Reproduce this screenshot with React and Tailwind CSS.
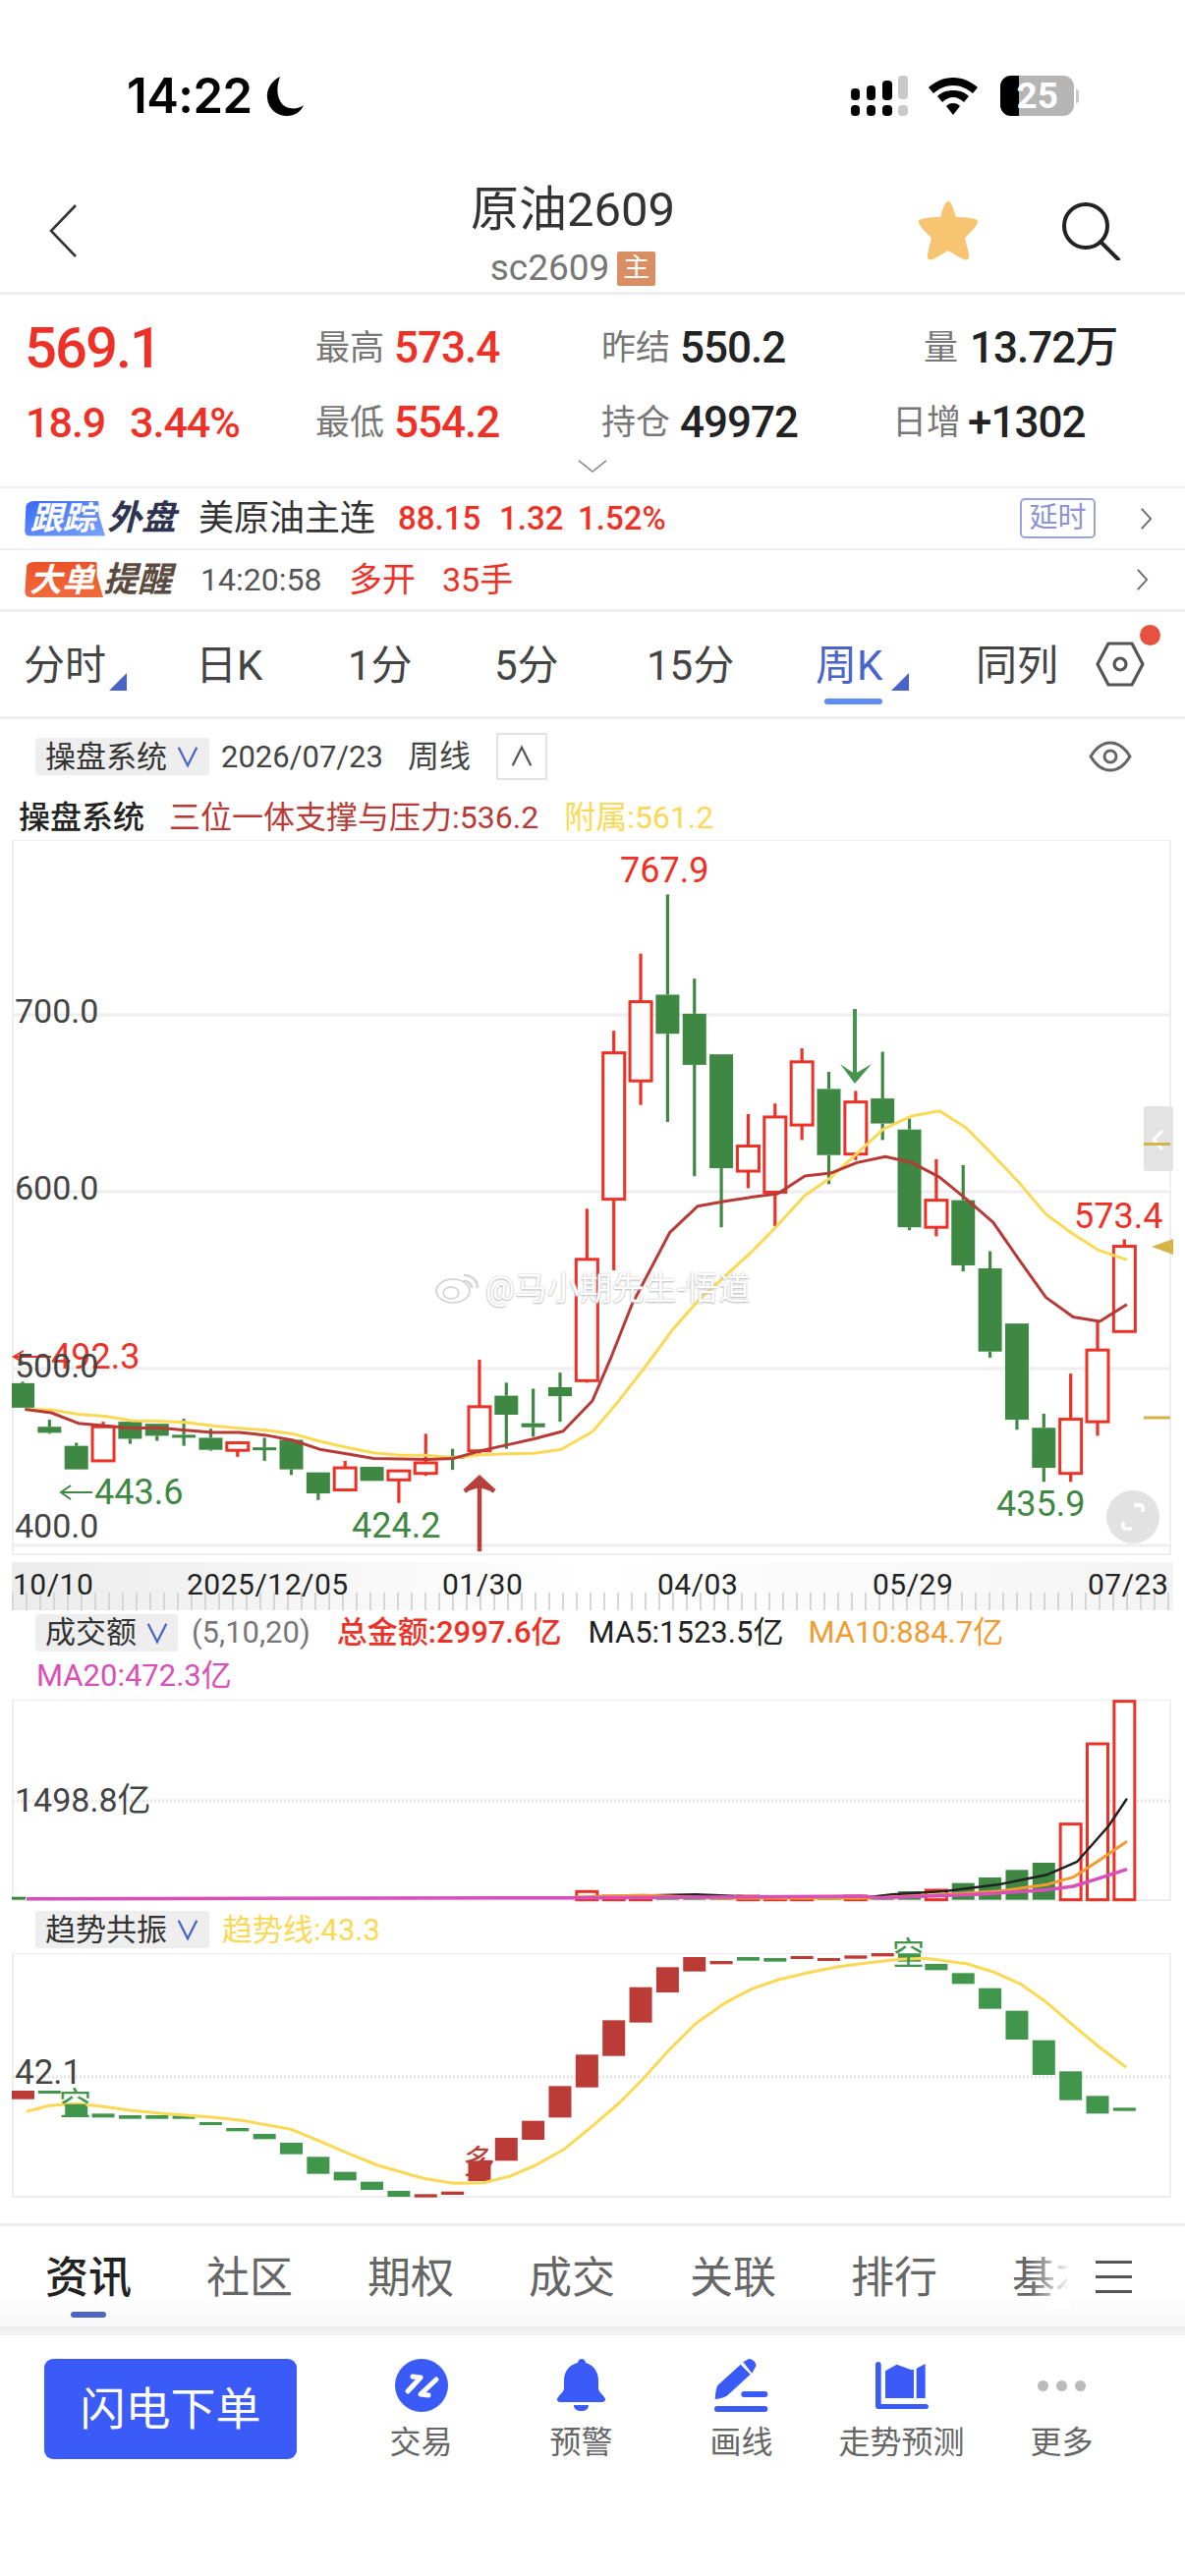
import React from "react";

const zy = (v) => 840 + v / 1.96;
const C = [
  ["g",1110,1113,1162,1162],["g",1186,1200,1212,1214],["g",1232,1238,1285,1285],["r",1190,1200,1268,1270],
  ["g",1190,1190,1224,1234],["g",1194,1194,1218,1228],["g",1184,1216,1220,1238],["g",1204,1222,1246,1248],
  ["r",1230,1232,1247,1260],["g",1222,1241,1246,1268],["g",1224,1226,1285,1296],["g",1291,1291,1333,1346],
  ["r",1268,1282,1326,1326],["g",1280,1280,1308,1308],["r",1286,1288,1306,1352],["r",1214,1272,1293,1298],
  ["g",1244,1258,1262,1286],["r",1066,1160,1248,1254],["g",1112,1138,1176,1244],["g",1124,1193,1201,1220],
  ["g",1092,1121,1139,1190],["r",765,866,1108,1112],["r",410,454,746,888],["r",256,352,510,558],
  ["g",138,338,416,592],["g",306,376,478,700],["g",457,457,684,802],["r",576,640,690,724],
  ["r",555,582,732,800],["r",445,472,598,628],["g",492,526,658,716],["r",530,552,656,668],
  ["g",452,545,595,628],["g",585,607,802,808],["r",666,748,802,820],["g",678,748,878,890],
  ["g",850,884,1050,1062],["g",994,994,1186,1206],["g",1174,1202,1282,1310],["r",1094,1185,1293,1310],
  ["r",990,1047,1190,1218],["r",826,840,1010,1010],
];
const cx = (i) => 23 + 27.35 * i;
const RED = "#ee3127", GREEN = "#3f8843";

const yl = [[66,1165],[136,1166],[207,1175],[278,1179],[349,1188],[420,1189],[491,1191],[562,1198],[633,1203],[704,1207],[775,1214],[846,1229],[917,1241],[988,1252],[1059,1257],[1130,1257],[1201,1262],[1272,1256],[1343,1254],[1414,1253],[1485,1245]];
const yr = [[0,1210],[70,1148],[140,1080],[210,1008],[280,948],[350,900],[420,852],[490,798],[560,740],[630,703],[700,655],[770,606],[845,580],[918,570],[988,603],[1060,658],[1130,714],[1200,776],[1270,815],[1340,848],[1414,867]];
const rl = [[66,1165],[136,1172],[207,1193],[278,1198],[349,1203],[420,1202],[491,1207],[562,1211],[633,1211],[704,1217],[775,1227],[846,1245],[917,1254],[988,1263],[1059,1264],[1130,1265],[1201,1263],[1272,1248],[1343,1236],[1414,1224],[1490,1209]];
const rr = [[0,1148],[50,1060],[105,955],[205,812],[278,760],[350,750],[420,742],[490,735],[562,700],[630,694],[700,673],[775,661],[845,673],[918,702],[988,745],[1060,792],[1130,868],[1200,942],[1272,981],[1342,990],[1414,956]];
const toPts = (l, r) => [...l.map(([x,y]) => `${(x/2.6).toFixed(1)},${zy(y).toFixed(1)}`), ...r.map(([x,y]) => `${(603+x/2.6).toFixed(1)},${zy(y).toFixed(1)}`)].join(" ");

const volTop = {0:932,21:916,22:930,23:930,24:928,25:928,26:930,27:930,28:932,29:932,30:932,31:930,32:930,33:915,34:912,35:890,36:873,37:850,38:828,39:710,40:465,41:335};
const vy = (v) => 1620 + v / 3;
const vp = (a) => a.map(([x,y]) => `${(x/1.3).toFixed(1)},${vy(y).toFixed(1)}`).join(" ");

const T = [["r",594,620],["g",594,603],["g",640,670],["g",664,676],["g",669,680],["g",669,680],["g",670,680],["g",690,699],["g",708,718],["g",726,742],["g",753,788],["g",796,848],["g",842,868],["g",872,897],["g",900,918],["r",910,920],["r",902,912],["r",808,870],["r",738,808],["r",686,744],["r",580,676],["r",484,584],["r",379,488],["r",278,386],["r",217,294],["r",186,230],["r",198,208],["g",186,197],["g",189,200],["r",183,192],["r",189,198],["r",181,191],["r",174,184],["g",175,200],["g",207,226],["g",235,268],["g",281,344],["g",350,438],["g",440,546],["g",535,623],["g",610,664],["g",646,656]];
const ty = (v) => 1930 + v / 3;
const tyl = [[35,658],[65,640],[100,634],[135,642],[175,655],[215,664],[280,675],[320,685],[385,712],[420,745],[460,785],[500,822],[560,862],[600,877],[640,875],[675,855],[710,820],[745,775],[785,700],[820,630],[850,560],[885,470],[920,390],[960,325],[995,283],[1030,255],[1070,233],[1110,215],[1150,203],[1190,193],[1225,190],[1280,207],[1315,232],[1350,268],[1385,325],[1420,395],[1455,462],[1490,523]];

function Chevron({ up, cls = "" }) {
  return (
    <svg viewBox="0 0 26 28" className={cls} fill="none" stroke="currentColor" strokeWidth="2.4">
      <path d={up ? "M3 24 13 4 23 24" : "M3 4 13 24 23 4"} />
    </svg>
  );
}
function Hex({ cls = "" }) {
  return (
    <svg viewBox="0 0 50 46" className={cls} fill="none" stroke="currentColor" strokeWidth="3.2">
      <path d="M13 2h24l11 21-11 21H13L2 23z" strokeLinejoin="round" />
      <circle cx="25" cy="23" r="6" />
    </svg>
  );
}
function Chip({ children, wide }) {
  return (
    <div className={`flex items-center h-[38px] bg-[#eeeeee] rounded-[3px] pl-[10px] ${wide ? "w-[177px]" : "w-[145px]"}`}>
      <span className="text-[31px] leading-none text-[#333]">{children}</span>
      <Chevron cls="w-[26px] h-[26px] ml-[8px] text-[#4a63c8]" />
    </div>
  );
}

function MainChart() {
  return (
    <div className="relative h-[735px] w-full">
      <svg viewBox="0 855 1206 735" className="absolute inset-0 w-full h-full">
        <rect x="13" y="855" width="1178" height="727" fill="#fff" stroke="#eeeeee" strokeWidth="2" />
        {[1033, 1213, 1393, 1573].map((y) => <line key={y} x1="13" x2="1192" y1={y} y2={y} stroke="#eeeeee" strokeWidth="3" />)}
        {C.map(([c, a, b, d, e], i) => {
          const x = cx(i), col = c === "r" ? RED : GREEN;
          const bt = zy(b), bb = zy(d);
          return (
            <g key={i}>
              <line x1={x} x2={x} y1={zy(a)} y2={bt} stroke={col} strokeWidth="3.2" />
              <line x1={x} x2={x} y1={bb} y2={zy(e)} stroke={col} strokeWidth="3.2" />
              {c === "r"
                ? <rect x={x - 11} y={bt} width="22" height={bb - bt} fill="#fff" stroke={col} strokeWidth="3" />
                : <rect x={i === 0 ? 12 : x - 12} y={bt} width={i === 0 ? 23 : 24} height={Math.max(bb - bt, 3)} fill={col} />}
            </g>
          );
        })}
        <polyline points={toPts(yl, yr)} fill="none" stroke="#fbd955" strokeWidth="3" strokeLinejoin="round" />
        <polyline points={toPts(rl, rr)} fill="none" stroke="#b83a36" strokeWidth="3" strokeLinejoin="round" />
        <path d="M488 1579V1505M473 1518 488 1504 503 1518" fill="none" stroke="#b8403c" strokeWidth="4.5" />
        <path d="M488 1506 472 1519 488 1514 503 1519z" fill="#b8403c" />
        <path d="M870 1027V1100" fill="none" stroke="#45954e" strokeWidth="4" />
        <path d="M855 1083 870 1103 887 1083 870 1093z" fill="#45954e" />
        <path d="M64 1519H94M72 1512 62 1519 72 1526" fill="none" stroke="#3f8843" strokeWidth="2" />
        <path d="M14 1381H52M24 1375 14 1381 24 1387" fill="none" stroke={RED} strokeWidth="2" />
        <rect x="1164" y="1126" width="30" height="66" rx="3" fill="#e3e3e3" />
        <path d="M1183 1151 1174 1160 1183 1170" fill="none" stroke="#fff" strokeWidth="3" />
        <line x1="1164" x2="1191" y1="1164.5" y2="1164.5" stroke="#d4b445" strokeWidth="3" />
        <line x1="1164" x2="1191" y1="1443" y2="1443" stroke="#d4b445" strokeWidth="3" />
        <path d="M1172 1269 1194 1261V1277z" fill="#d4b445" />
        <ellipse cx="1153" cy="1544" rx="27" ry="27" fill="#e2e2e2" />
        <path d="M1143 1556V1549M1143 1556H1152M1163 1532V1539M1163 1532H1154" fill="none" stroke="#fff" strokeWidth="3.5" />
        <g fill="#fff" stroke="#cfcfcf" strokeWidth="1.5">
          <ellipse cx="461" cy="1314" rx="17" ry="12" />
          <ellipse cx="459" cy="1316" rx="8" ry="6" />
        </g>
        <path d="M472 1298a13 13 0 0 1 14 13M472 1304a7 7 0 0 1 8 7" fill="none" stroke="#d5d5d5" strokeWidth="2.5" />
      </svg>

      <span className="absolute left-[15px] top-[155px] text-[34px] leading-[38px] text-[#444]">700.0</span>
      <span className="absolute left-[15px] top-[335px] text-[34px] leading-[38px] text-[#444]">600.0</span>
      <span className="absolute left-[52px] top-[507px] text-[36px] leading-[38px] text-[#ee3127]">492.3</span>
      <span className="absolute left-[15px] top-[516px] text-[34px] leading-[38px] text-[#444]">500.0</span>
      <span className="absolute left-[15px] top-[679px] text-[34px] leading-[38px] text-[#444]">400.0</span>
      <span className="absolute left-[631px] top-[12px] text-[36px] leading-[38px] text-[#ee3127]">767.9</span>
      <span className="absolute left-[1093px] top-[364px] text-[36px] leading-[38px] text-[#ee3127]">573.4</span>
      <span className="absolute left-[96px] top-[645px] text-[36px] leading-[38px] text-[#3f8843]">443.6</span>
      <span className="absolute left-[358px] top-[679px] text-[36px] leading-[38px] text-[#3f8843]">424.2</span>
      <span className="absolute left-[1014px] top-[657px] text-[36px] leading-[38px] text-[#3f8843]">435.9</span>
      <span className="absolute left-[494px] top-[438px] text-[33px] leading-[38px] text-white [text-shadow:0_0_2px_#bdbdbd,0_1px_2px_#bdbdbd] whitespace-nowrap">@马小期先生-悟道</span>
    </div>
  );
}

function DateAxis() {
  const labels = [["10/10", "w-[177px]"], ["2025/12/05", "w-[260px]"], ["01/30", "w-[219px]"], ["04/03", "w-[219px]"], ["05/29", "w-[219px]"], ["07/23", ""]];
  return (
    <div className="relative mt-0 h-[49px] mx-[12px] bg-gradient-to-r from-[#ececec] via-[#ffffff] to-[#f4f4f4] overflow-hidden">
      <div className="absolute left-0 right-0 bottom-0 h-[18px] bg-[repeating-linear-gradient(90deg,#d6d6d6_0,#d6d6d6_2px,transparent_2px,transparent_14px)]" />
      <div className="relative flex items-center h-[45px] pl-[1px] text-[30px] text-[#222] tracking-[0.5px]">
        {labels.map(([t, w]) => <span key={t} className={w}>{t}</span>)}
      </div>
    </div>
  );
}

function VolChart() {
  return (
    <div className="relative h-[206px] w-full">
      <svg viewBox="0 1730 1206 206" className="absolute inset-0 w-full h-full">
        <rect x="13" y="1730" width="1178" height="204" fill="#fff" stroke="#eeeeee" strokeWidth="2" />
        <line x1="13" x2="1192" y1="1833" y2="1833" stroke="#e4e4e4" strokeWidth="3" strokeDasharray="2 2" />
        {C.map(([c], i) => {
          if (volTop[i] === undefined) return null;
          const x = cx(i), top = vy(volTop[i]), bot = vy(941);
          return c === "r"
            ? <rect key={i} x={x - 10.5} y={top} width="21" height={bot - top} fill="#fff" stroke={RED} strokeWidth="3" />
            : <rect key={i} x={i === 0 ? 12 : x - 11.5} y={top} width={i === 0 ? 14 : 23} height={bot - top} fill={GREEN} />;
        })}
        <polyline points={vp([[800,936],[860,928],[920,925],[1000,932],[1150,933],[1180,925],[1250,915],[1320,895],[1385,865],[1425,825],[1467,715],[1491,632]])} fill="none" stroke="#222" strokeWidth="2.5" />
        <polyline points={vp([[760,933],[850,927],[950,936],[1150,936],[1250,925],[1320,915],[1385,895],[1420,872],[1455,820],[1491,763]])} fill="none" stroke="#f29b30" strokeWidth="3" />
        <polyline points={vp([[35,938],[760,935],[1140,930],[1165,935],[1290,925],[1380,912],[1420,900],[1455,875],[1491,848]])} fill="none" stroke="#d94fb8" strokeWidth="3.5" />
      </svg>
      <span className="absolute left-[15px] top-[83px] text-[34px] leading-[38px] text-[#444]">1498.8亿</span>
    </div>
  );
}

function TrendChart() {
  return (
    <div className="relative h-[250px] w-full">
      <svg viewBox="0 1988 1206 250" className="absolute inset-0 w-full h-full">
        <rect x="13" y="1988" width="1178" height="248" fill="#fff" stroke="#eeeeee" strokeWidth="2" />
        <line x1="13" x2="1192" y1="2114" y2="2114" stroke="#e4e4e4" strokeWidth="3" strokeDasharray="2 2" />
        {T.map(([c, a, b], i) => (
          <rect key={i} x={i === 0 ? 12 : cx(i) - 11.5} y={ty(a)} width={23} height={ty(b) - ty(a)} fill={c === "r" ? "#bb3b36" : "#41964b"} />
        ))}
        <polyline points={tyl.map(([x, y]) => `${(x / 1.3).toFixed(1)},${ty(y).toFixed(1)}`).join(" ")} fill="none" stroke="#fbd955" strokeWidth="3" strokeLinejoin="round" />
      </svg>
      <span className="absolute left-[15px] top-[103px] text-[35px] leading-[38px] text-[#444]">42.1</span>
      <span className="absolute left-[60px] top-[137px] text-[33px] leading-[34px] text-[#41964b]">空</span>
      <span className="absolute left-[908px] top-[-16px] text-[33px] leading-[34px] text-[#41964b]">空</span>
      <span className="absolute left-[471px] top-[196px] text-[33px] leading-[34px] text-[#bb3b36]">多</span>
    </div>
  );
}

function NavItem({ label, icon }) {
  return (
    <div className="flex flex-col items-center w-[163px]">
      <div className="h-[54px] w-[70px] flex items-center justify-center">{icon}</div>
      <span className="mt-[13px] text-[32px] leading-[36px] text-[#666] whitespace-nowrap">{label}</span>
    </div>
  );
}

const Triangle = ({ cls }) => (
  <svg viewBox="0 0 18 18" className={cls}><path d="M18 0V18H0z" fill="#4a63c8" /></svg>
);

export default function App() {
  const B = "#3a5bf7";
  return (
    <div className="w-[1206px] h-[2622px] bg-white overflow-hidden font-['Roboto','Noto_Sans_CJK_SC',sans-serif] text-[#222]">
      {/* status bar */}
      <div className="flex items-center h-[195px] pl-[129px]">
        <span className="text-[49px] leading-none font-semibold text-black font-['Inter','Roboto',sans-serif] tracking-[-0.5px]">14:22</span>
        <svg viewBox="0 0 38 40" className="w-[38px] h-[40px] ml-[14px]"><path d="M14 0C4 5 0 14 1 22c1 11 10 18 20 18 8 0 14-4 17-11-4 3-9 4-14 3C13 30 8 16 14 0z" fill="#000" /></svg>
        <svg viewBox="0 0 58 41" className="w-[58px] h-[41px] ml-[557px]">
          <rect x="0" y="13" width="9" height="12" rx="4" />
          <rect x="16" y="10" width="9" height="15" rx="4" />
          <rect x="32" y="5" width="10" height="20" rx="4" />
          <rect x="48" y="0" width="10" height="24" rx="4" fill="#c9c9c9" />
          <rect x="0" y="30" width="9" height="11" rx="4" />
          <rect x="16" y="30" width="9" height="11" rx="4" />
          <rect x="32" y="30" width="10" height="11" rx="4" />
          <rect x="48" y="30" width="10" height="11" rx="4" fill="#c9c9c9" />
        </svg>
        <svg viewBox="0 0 50 38" className="w-[50px] h-[38px] ml-[21px]">
          <path d="M25 0C15 0 7 4 0 10l5 6c6-5 12-8 20-8s14 3 20 8l5-6C43 4 35 0 25 0z" />
          <path d="M25 13c-7 0-12 2-16 6l5 6c3-3 7-5 11-5s8 2 11 5l5-6c-4-4-9-6-16-6z" />
          <path d="M25 26c-3 0-5 1-7 3l7 9 7-9c-2-2-4-3-7-3z" />
        </svg>
        <div className="relative flex ml-[23px] h-[41px] w-[75px] rounded-[11px] overflow-hidden bg-[#b5b5b5]">
          <div className="w-[19px] h-full bg-black" />
          <span className="absolute left-[17px] top-[2px] text-[37px] leading-[38px] font-bold text-white">25</span>
        </div>
        <div className="ml-[2px] w-[3px] h-[14px] rounded-r-full bg-[#c9c9c9]" />
      </div>

      {/* header */}
      <div className="flex h-[105px] border-b-[3px] border-[#eeeeee]">
        <svg viewBox="0 0 28 54" className="w-[28px] h-[54px] ml-[50px] mt-[13px]" fill="none" stroke="#333" strokeWidth="2.6"><path d="M27 1 2 27 27 53" /></svg>
        <div className="flex flex-col items-center w-[210px] ml-[400px]">
          <span className="text-[49px] leading-[40px] text-[#333] mt-[-1px] whitespace-nowrap">原油2609</span>
          <div className="flex items-center mt-[21px]">
            <span className="text-[37px] leading-[36px] text-[#777]">sc2609</span>
            <span className="ml-[8px] w-[39px] h-[35px] flex items-center justify-center bg-[#d98e63] rounded-[2px] text-[27px] leading-none text-white">主</span>
          </div>
        </div>
        <svg viewBox="0 0 62 62" className="w-[62px] h-[62px] ml-[246px] mt-[9px]"><path d="M31 1c3 0 5 6 8 16 10 0 21 1 22 4 1 4-7 11-13 17 2 9 6 20 3 22-3 2-12-4-20-9-8 5-17 11-20 9-3-2 1-13 3-22C8 32 0 25 1 21c1-3 12-4 22-4C26 7 28 1 31 1z" fill="#f7c472" /></svg>
        <svg viewBox="0 0 60 60" className="w-[60px] h-[60px] ml-[84px] mt-[10px]" fill="none" stroke="#222" strokeWidth="4"><circle cx="25" cy="25" r="22" /><path d="M40 41 58 59" strokeLinecap="round" /></svg>
      </div>

      {/* quote */}
      <div className="h-[197px] border-b-[2px] border-[#eeeeee]">
        <div className="flex items-center h-[100px] pt-[8px]">
          <span className="w-[321px] pl-[25px] text-[58px] leading-none font-medium tracking-[-2px] text-[#ee3127]">569.1</span>
          <div className="w-[291px] flex items-center text-[44px] leading-none tracking-[-1px]"><span className="text-[35px] tracking-normal text-[#777] w-[80px]">最高</span><span className="font-medium text-[#ee3127]">573.4</span></div>
          <div className="w-[328px] flex items-center text-[44px] leading-none tracking-[-1px]"><span className="text-[35px] tracking-normal text-[#777] w-[80px]">昨结</span><span className="font-medium text-[#222]">550.2</span></div>
          <div className="flex items-center text-[44px] leading-none tracking-[-1px]"><span className="text-[35px] tracking-normal text-[#777] w-[47px]">量</span><span className="font-medium text-[#222] whitespace-nowrap">13.72万</span></div>
        </div>
        <div className="flex items-center h-[60px]">
          <div className="flex w-[321px] pl-[26px] text-[43px] leading-none font-medium tracking-[-1px] text-[#ee3127]">
            <span className="w-[106px]">18.9</span>
            <span>3.44%</span>
          </div>
          <div className="w-[291px] flex items-center text-[44px] leading-none tracking-[-1px]"><span className="text-[35px] tracking-normal text-[#777] w-[80px]">最低</span><span className="font-medium text-[#ee3127]">554.2</span></div>
          <div className="w-[296px] flex items-center text-[44px] leading-none tracking-[-1px]"><span className="text-[35px] tracking-normal text-[#777] w-[80px]">持仓</span><span className="font-medium text-[#222]">49972</span></div>
          <div className="flex items-center text-[44px] leading-none tracking-[-1px]"><span className="text-[35px] tracking-normal text-[#777] w-[77px]">日增</span><span className="font-medium text-[#222]">+1302</span></div>
        </div>
        <div className="flex justify-center">
          <svg viewBox="0 0 32 14" className="w-[32px] h-[13px] mt-[8px]" fill="none" stroke="#888" strokeWidth="1.6"><path d="M1 1 16 13 31 1" /></svg>
        </div>
      </div>

      {/* rows */}
      <div className="flex items-center h-[63px] border-b-[2px] border-[#eeeeee]">
        <span className="ml-[25px] w-[82px] h-[36px] flex items-center justify-center pr-[4px] rounded-t-[9px] rounded-bl-[6px] [clip-path:polygon(2%_0,92%_0,92%_40%,100%_100%,0_100%)] bg-gradient-to-br from-[#3d68f5] to-[#7aa2f9] text-[33px] leading-none italic font-bold text-white">跟踪</span>
        <span className="ml-[2px] w-[72px] text-[35px] leading-none italic font-bold text-[#2e3450]">外盘</span>
        <span className="ml-[21px] w-[203px] text-[36px] leading-none text-[#333]">美原油主连</span>
        <span className="text-[33px] leading-none font-medium text-[#ee3127] w-[103px]">88.15</span>
        <span className="text-[33px] leading-none font-medium text-[#ee3127] w-[80px]">1.32</span>
        <span className="text-[33px] leading-none font-medium text-[#ee3127] w-[450px]">1.52%</span>
        <span className="w-[77px] h-[41px] flex items-center justify-center border-[2px] border-[#9aa4dc] rounded-[5px] text-[29px] leading-none text-[#8a94d0]">延时</span>
        <svg viewBox="0 0 14 26" className="w-[13px] h-[24px] ml-[45px]" fill="none" stroke="#666" strokeWidth="2"><path d="M2 2 12 13 2 24" /></svg>
      </div>
      <div className="flex items-center h-[63px] border-b-[3px] border-[#eeeeee]">
        <span className="ml-[25px] w-[80px] h-[36px] flex items-center justify-center pr-[4px] rounded-t-[9px] rounded-bl-[6px] [clip-path:polygon(3%_0,92%_0,92%_40%,100%_100%,0_100%)] bg-gradient-to-b from-[#ec5229] to-[#f06a3c] text-[33px] leading-none italic font-bold text-white">大单</span>
        <span className="w-[74px] text-[35px] leading-none italic font-bold text-[#5a4a40]">提醒</span>
        <span className="ml-[25px] w-[151px] text-[32px] leading-none text-[#555]">14:20:58</span>
        <span className="w-[95px] text-[34px] leading-none text-[#ee3127]">多开</span>
        <span className="w-[706px] text-[34px] leading-none text-[#ee3127]">35手</span>
        <svg viewBox="0 0 14 26" className="w-[13px] h-[24px]" fill="none" stroke="#666" strokeWidth="2"><path d="M2 2 12 13 2 24" /></svg>
      </div>

      {/* tabs */}
      <div className="relative flex items-center h-[109px] pt-[2px] border-b-[3px] border-[#eeeeee] text-[42px] text-[#444]">
        <span className="absolute left-[24px]">分时</span>
        <Triangle cls="absolute left-[111px] top-[62px] w-[18px] h-[18px]" />
        <span className="absolute left-[199px]">日K</span>
        <span className="absolute left-[354px]">1分</span>
        <span className="absolute left-[503px]">5分</span>
        <span className="absolute left-[658px]">15分</span>
        <span className="absolute left-[830px] text-[#4a63c8]">周K</span>
        <Triangle cls="absolute left-[907px] top-[62px] w-[18px] h-[18px]" />
        <div className="absolute left-[839px] top-[88px] w-[59px] h-[6px] rounded-full bg-[#5f8bf5]" />
        <span className="absolute left-[993px]">同列</span>
        <Hex cls="absolute left-[1115px] top-[30px] w-[50px] h-[46px] text-[#555]" />
        <div className="absolute left-[1160px] top-[13px] w-[21px] h-[21px] rounded-full bg-[#e8503f]" />
      </div>

      {/* toolbar */}
      <div className="flex items-center h-[62px] pt-[14px] pl-[36px]">
        <Chip wide>操盘系统</Chip>
        <span className="ml-[12px] text-[31px] leading-none text-[#444]">2026/07/23</span>
        <span className="ml-[25px] text-[32px] leading-none text-[#444]">周线</span>
        <div className="ml-[26px] w-[52px] h-[48px] flex items-center justify-center border-[2px] border-[#e3e3e3]">
          <Chevron up cls="w-[26px] h-[26px] text-[#555]" />
        </div>
        <svg viewBox="0 0 44 34" className="w-[44px] h-[34px] ml-[551px]" fill="none" stroke="#666" strokeWidth="3"><path d="M2 17C8 7 14 3 22 3s14 4 20 14c-6 10-12 14-20 14S8 27 2 17z" /><circle cx="22" cy="17" r="6" /></svg>
      </div>
      <div className="flex items-center h-[61px] pt-[14px] pl-[19px] text-[32px] leading-none whitespace-nowrap">
        <span className="font-medium text-[#222]">操盘系统</span>
        <span className="ml-[25px] text-[#b83a36]">三位一体支撑与压力:536.2</span>
        <span className="ml-[26px] text-[#fbd955]">附属:561.2</span>
      </div>

      <MainChart />
      <DateAxis />

      {/* volume header */}
      <div className="flex items-center h-[43px] pl-[36px] mt-[1px] whitespace-nowrap text-[31px] leading-none">
        <Chip>成交额</Chip>
        <span className="ml-[14px] text-[#777]">(5,10,20)</span>
        <span className="ml-[27px] font-medium text-[#ee3127]">总金额:2997.6亿</span>
        <span className="ml-[27px] text-[#222]">MA5:1523.5亿</span>
        <span className="ml-[25px] text-[#f29b30]">MA10:884.7亿</span>
      </div>
      <div className="h-[47px] pl-[37px] pt-[5px] text-[31px] leading-[36px] text-[#d94fb8]">MA20:472.3亿</div>
      <VolChart />

      {/* trend header */}
      <div className="flex items-center h-[52px] pt-[4px] pl-[36px] whitespace-nowrap">
        <Chip wide>趋势共振</Chip>
        <span className="ml-[13px] text-[31px] leading-none text-[#fbd955]">趋势线:43.3</span>
      </div>
      <TrendChart />

      {/* bottom tabs */}
      <div className="h-[25px]" />
      <div className="relative h-[108px] border-t-[3px] border-b-[3px] border-[#ececec] bg-gradient-to-b from-[#ffffff] from-70% to-[#f7f7f7]">
        <div className="flex items-center h-[102px] pt-[3px] text-[44px] leading-none text-[#666]">
          <span className="ml-[46px] w-[164px] font-medium text-[#222]">资讯</span>
          <span className="w-[164px]">社区</span>
          <span className="w-[164px]">期权</span>
          <span className="w-[164px]">成交</span>
          <span className="w-[164px]">关联</span>
          <span className="w-[164px]">排行</span>
          <span className="w-[56px] overflow-hidden whitespace-nowrap">基本</span>
        </div>
        <div className="absolute left-[1048px] top-[25px] w-[42px] h-[58px] bg-gradient-to-r from-[#ffffff00] to-[#ffffff]" />
        <div className="absolute left-[1115px] top-[35px] w-[37px] flex flex-col gap-[12px]">
          <div className="h-[3px] bg-[#555]" /><div className="h-[3px] bg-[#555]" /><div className="h-[3px] bg-[#555]" />
        </div>
        <div className="absolute left-[72px] top-[87px] w-[36px] h-[6px] rounded-full bg-[#4f66c0]" />
      </div>
      <div className="h-[6px] bg-[#f2f2f2]" />

      {/* bottom bar */}
      <div className="flex pt-[24px] pl-[45px]">
        <div className="w-[257px] h-[102px] rounded-[9px] flex items-center justify-center text-[46px] leading-none text-white bg-[#3a5bf7] mr-[45px]">闪电下单</div>
        <NavItem label="交易" icon={
          <svg viewBox="0 0 54 54" className="w-[54px] h-[54px]"><circle cx="27" cy="27" r="27" fill={B} /><path d="M18 18 26 19 13 33M42 21 26 36 34 37" fill="none" stroke="#fff" strokeWidth="5" strokeLinecap="round" strokeLinejoin="round" /></svg>} />
        <NavItem label="预警" icon={
          <svg viewBox="0 0 50 54" className="w-[50px] h-[54px]"><path d="M25 0c2 0 4 2 4 4 8 2 13 9 13 18v8c0 3 3 5 6 9 2 2 1 5-2 5H3c-3 0-4-3-2-5 3-4 6-6 6-9v-8C7 13 12 6 21 4c0-2 2-4 4-4z" fill={B} /><path d="M17 47H32c0 4-3 6-7.5 6S17 51 17 47z" fill={B} /></svg>} />
        <NavItem label="画线" icon={
          <svg viewBox="0 0 55 54" className="w-[55px] h-[54px]"><path d="M26.7 5.7 36.7 15.7 13.3 37.3C9 40 4 41 .7 41 1 36 1.5 31 3.3 27z" fill={B} /><path d="M29.3 3.3 35 0C39 0 43 4 42.3 7.3L38.3 14.7z" fill={B} /><rect x="27.3" y="33" width="27" height="6" rx="3" fill={B} /><rect x="0" y="48" width="54.3" height="6" rx="3" fill={B} /></svg>} />
        <NavItem label="走势预测" icon={
          <svg viewBox="0 0 54 48" className="w-[54px] h-[48px]"><path d="M3 0C4.5 0 5.7 1 5.7 3V43H51.5C53 43 54 44 54 45.5S53 48 51.5 48H3C1 48 0 47 0 45V3C0 1 1 0 3 0z" fill={B} /><path d="M10 9.3 21.7 2.7 36.7 8.3 39 7.7V37H10z" fill={B} /><path d="M41.7 6.7 50.7 2V37H41.7z" fill={B} /></svg>} />
        <NavItem label="更多" icon={
          <div className="flex gap-[8px]"><div className="w-[11px] h-[11px] rounded-full bg-[#bbbbbb]" /><div className="w-[11px] h-[11px] rounded-full bg-[#bbbbbb]" /><div className="w-[11px] h-[11px] rounded-full bg-[#bbbbbb]" /></div>} />
      </div>
    </div>
  );
}
